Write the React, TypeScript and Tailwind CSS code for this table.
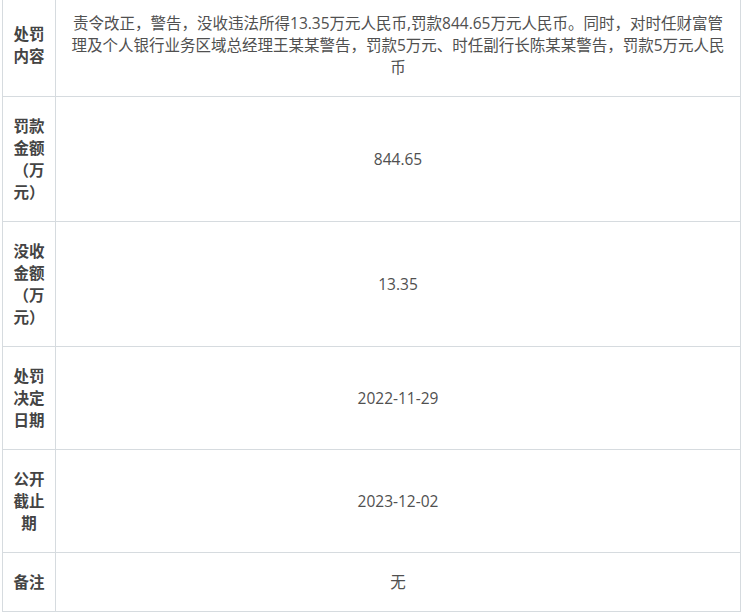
const rows: { label: string; value: string }[] = [
  {
    label: '处罚内容',
    value:
      '责令改正，警告，没收违法所得13.35万元人民币,罚款844.65万元人民币。同时，对时任财富管理及个人银行业务区域总经理王某某警告，罚款5万元、时任副行长陈某某警告，罚款5万元人民币',
  },
  { label: '罚款金额（万元）', value: '844.65' },
  { label: '没收金额（万元）', value: '13.35' },
  { label: '处罚决定日期', value: '2022-11-29' },
  { label: '公开截止期', value: '2023-12-02' },
  { label: '备注', value: '无' },
]

export default function App() {
  return (
    <div
      className="min-h-screen bg-white overflow-hidden"
      style={{ fontFamily: "'Open Sans', 'Noto Sans CJK SC', sans-serif" }}
    >
      <table className="mt-[-7px] ml-[2px] w-[739px] table-fixed border-collapse text-[15.5px] leading-[22px]">
        <colgroup>
          <col className="w-[53px]" />
          <col />
        </colgroup>
        <tbody>
          {rows.map((r) => (
            <tr key={r.label}>
              <td className="border border-[#d6dbdf] px-[10px] py-[18px] text-center align-middle font-bold text-[#444]">
                {r.label}
              </td>
              <td className="border border-[#d6dbdf] px-[12px] py-[18px] text-center align-middle text-[#505050]">
                {r.value}
              </td>
            </tr>
          ))}
        </tbody>
      </table>
    </div>
  )
}
